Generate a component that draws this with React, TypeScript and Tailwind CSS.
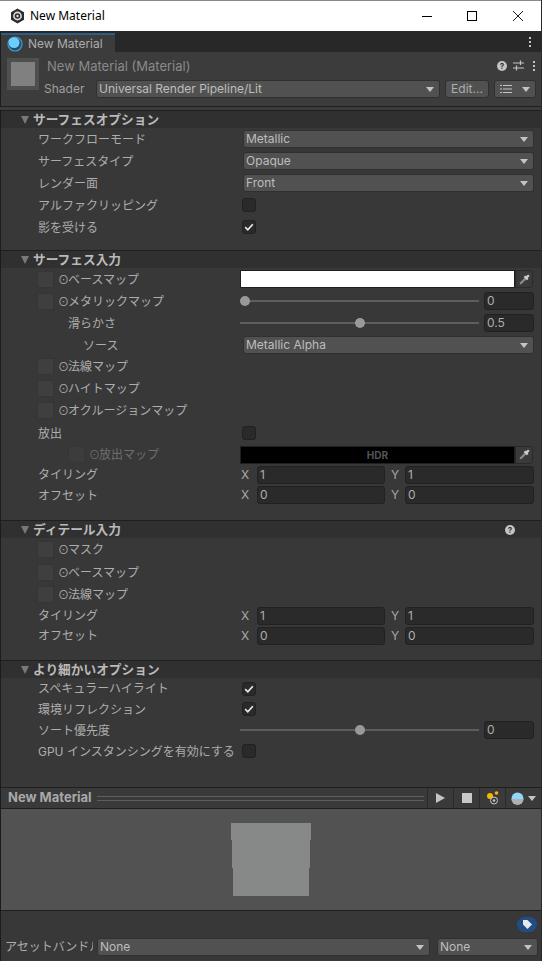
import type { ReactNode } from "react";

const jp = "[font-family:Inter,'Noto_Sans_CJK_JP',sans-serif]";

function Caret() {
    return <span className="w-0 h-0 border-l-[4px] border-r-[4px] border-t-[5px] border-l-transparent border-r-transparent border-t-[#c4c4c4]" />;
}

function Dropdown({ children, className = "" }: { children: ReactNode; className?: string }) {
    return (
        <div className={`h-[18px] bg-[#515151] border border-[#303030] rounded-[3px] flex items-center justify-between pl-[2px] pr-[5px] text-[12px] text-[#bdbdbd] ${className}`}>
            <span className="truncate">{children}</span>
            <Caret />
        </div>
    );
}

function Check({ on }: { on?: boolean }) {
    return (
        <div className="ml-[2px] w-[14px] h-[14px] bg-[#2a2a2a] border border-[#212121] rounded-[3px] flex items-center justify-center">
            {on && (
                <svg width="10" height="10" viewBox="0 0 10 10" fill="none" stroke="#e8e8e8" strokeWidth="1.7">
                    <path d="M1.2 5.2 L3.8 7.8 L8.8 2.2" />
                </svg>
            )}
        </div>
    );
}

function Row({ h, label, indent = "pl-[37px]", children }: { h: string; label?: ReactNode; indent?: string; children?: ReactNode }) {
    return (
        <div className={`flex items-center ${h}`}>
            <div className={`w-[239px] shrink-0 whitespace-nowrap overflow-hidden pt-[1px] text-[12px] text-[#adadad] ${indent}`}>{label}</div>
            <div className="w-[294px] flex items-center">{children}</div>
        </div>
    );
}

function TexRow({ h, label, pad = "pl-[36px]", dim }: { h: string; label: string; pad?: string; dim?: boolean }) {
    return (
        <div className={`flex items-center gap-[4px] ${h} ${pad}`}>
            <div className={`w-[17px] h-[17px] bg-[#3f3f3f] border border-[#353535] ${dim ? "opacity-60" : ""}`} />
            <span className={`pt-[1px] text-[12px] whitespace-nowrap ${dim ? "text-[#6e6e6e]" : "text-[#adadad]"}`}>
                <span className="inline-block w-[10px] text-[11px] leading-[12px]">⊙</span>{label}
            </span>
        </div>
    );
}

function Header({ title, help }: { title: string; help?: boolean }) {
    return (
        <div className="h-[17px] bg-[#303030] border-t border-[#1f1f1f] box-content flex items-center">
            <span className="ml-[20px] w-0 h-0 border-l-[4.5px] border-r-[4.5px] border-t-[8px] border-l-transparent border-r-transparent border-t-[#787878]" />
            <span className="ml-[4px] text-[12.7px] font-bold text-[#bababa]">{title}</span>
            {help && <span className="ml-auto mr-[26px] w-[10px] h-[10px] rounded-full bg-[#c4c4c4] text-[#333] text-[8px] font-bold leading-[10px] text-center">?</span>}
        </div>
    );
}

function NumField({ v, className = "" }: { v: string; className?: string }) {
    return <div className={`h-[18px] bg-[#2a2a2a] border border-[#212121] rounded-[3px] pl-[2px] text-[12px] leading-[16px] text-[#adadad] ${className}`}>{v}</div>;
}

function Slider({ pos, v }: { pos: string; v: string }) {
    return (
        <div className="flex items-center w-full">
            <div className={`w-[239px] h-[2px] bg-[#5e5e5e] flex items-center ${pos}`}>
                <div className="w-[10px] h-[10px] rounded-full bg-[#999]" />
            </div>
            <NumField v={v} className="ml-[5px] w-[50px]" />
        </div>
    );
}

function Vec({ a, b }: { a: string; b: string }) {
    return (
        <div className="flex items-center w-full text-[12px] text-[#a8a8a8]">
            <span className="w-[17px] pl-[1px]">X</span>
            <NumField v={a} className="w-[128px]" />
            <span className="w-[20px] text-center">Y</span>
            <NumField v={b} className="w-[129px]" />
        </div>
    );
}

function Dropper() {
    return (
        <div className="w-[18px] h-[18px] bg-[#3a3a3a] border border-[#2a2a2a] rounded-r-[3px] flex items-center justify-center">
            <svg width="13" height="13" viewBox="0 0 12 12" fill="none">
                <path d="M1.5 10.5 L2 8.5 L6.5 4 L8 5.5 L3.5 10 Z" fill="#8a8a8a" />
                <path d="M6 3 L9 6 M7.5 4.5 L10 2" stroke="#d0d0d0" strokeWidth="2" />
            </svg>
        </div>
    );
}

function Dots() {
    return (
        <div className="flex flex-col gap-[2px]">
            <span className="w-[2px] h-[2px] bg-[#c4c4c4]" />
            <span className="w-[2px] h-[2px] bg-[#c4c4c4]" />
            <span className="w-[2px] h-[2px] bg-[#c4c4c4]" />
        </div>
    );
}

export default function App() {
    return (
        <div className={`w-[542px] h-[961px] overflow-hidden bg-[#383838] border-r border-[#2a2a2a] flex flex-col ${jp}`}>
            <div className="h-[31px] shrink-0 bg-white border-t border-[#8a8a8a] flex items-center">
                <svg className="ml-[10px]" width="15" height="16" viewBox="0 0 15 16">
                    <path d="M7.5 0.5 L14 4.2 V11.8 L7.5 15.5 L1 11.8 V4.2 Z" fill="#2b2b2b" />
                    <circle cx="7.5" cy="8" r="3.6" fill="none" stroke="#dcdcdc" strokeWidth="1.6" />
                    <circle cx="7.5" cy="8" r="1.2" fill="#dcdcdc" />
                </svg>
                <span className="ml-[5px] text-[12px] text-black font-['Noto_Sans']">New Material</span>
                <div className="ml-auto flex items-center">
                    <span className="w-[10px] h-[1px] bg-black mr-[35px]" />
                    <span className="w-[10px] h-[10px] border border-black mr-[36px]" />
                    <svg className="mr-[18px]" width="10" height="10" viewBox="0 0 10 10" stroke="black" strokeWidth="0.9">
                        <path d="M0 0 L10 10 M10 0 L0 10" />
                    </svg>
                </div>
            </div>

            <div className="h-[21px] shrink-0 bg-[#282828] flex items-stretch border-l border-[#1c1c1c]">
                <div className="w-[114px] mt-[2px] bg-[#3c3c3c] border-t-2 border-[#2c5d87] flex items-center">
                    <svg className="ml-[6px]" width="16" height="16" viewBox="0 0 17 17">
                        <circle cx="8.5" cy="8.5" r="7.5" fill="#1f4f6c" stroke="#3f9fd0" strokeWidth="1.2" />
                        <circle cx="7.5" cy="7" r="5.8" fill="#6fcdfb" />
                    </svg>
                    <span className="ml-[5px] text-[12px] text-[#adadad]">New Material</span>
                </div>
                <div className="ml-auto mr-[10px] flex items-center">
                    <Dots />
                </div>
            </div>

            <div className="h-[54px] shrink-0 bg-[#3c3c3c] border-l border-[#1c1c1c] relative">
                <div className="flex items-start pt-[6px] pl-[6px]">
                    <div className="w-[32px] h-[32px] bg-[#4f4f4f] flex items-center justify-center">
                        <div className="w-[24px] h-[24px] bg-[#808080]" />
                    </div>
                    <span className="ml-[8px] mt-[-1px] text-[13px] text-[#8a8a8a]">New Material (Material)</span>
                    <div className="ml-auto mr-[6px] mt-[2px] flex items-center gap-[6px]">
                        <span className="w-[10px] h-[10px] rounded-full bg-[#c4c4c4] text-[#333] text-[8px] font-bold leading-[10px] text-center">?</span>
                        <svg width="11" height="11" viewBox="0 0 11 11" stroke="#c4c4c4" strokeWidth="1.2">
                            <path d="M0 3 H11 M0 8 H11 M7.5 0.5 V5 M3.5 5.5 V10.5" />
                        </svg>
                        <div className="ml-[3px]"><Dots /></div>
                    </div>
                </div>
                <div className="absolute left-0 right-0 top-[28px] flex items-center pl-[43px]">
                    <span className="w-[52px] text-[12px] text-[#a0a0a0]">Shader</span>
                    <Dropdown className="w-[344px]">Universal Render Pipeline/Lit</Dropdown>
                    <div className="ml-[5px] w-[44px] h-[18px] bg-[#515151] border border-[#303030] rounded-[3px] text-[12px] text-[#adadad] leading-[16px] text-center">Edit...</div>
                    <div className="ml-[5px] w-[42px] h-[18px] bg-[#515151] border border-[#303030] rounded-[3px] flex items-center justify-between px-[5px]">
                        <svg width="12" height="10" viewBox="0 0 12 10" stroke="#c4c4c4" strokeWidth="1">
                            <path d="M3 1.5 H12 M3 5 H12 M3 8.5 H12 M0 1.5 H2 M0 5 H2 M0 8.5 H2" />
                        </svg>
                        <Caret />
                    </div>
                </div>
            </div>

            <div className="h-[4px] shrink-0 border-t border-[#1f1f1f] bg-[#3c3c3c]" />

            <div className="flex-1 min-h-0 border-l border-[#1c1c1c] flex flex-col">
                <Header title="サーフェスオプション" />
                <Row h="h-[22px]" label="ワークフローモード"><Dropdown className="ml-[3px] w-[291px]">Metallic</Dropdown></Row>
                <Row h="h-[22px]" label="サーフェスタイプ"><Dropdown className="ml-[3px] w-[291px]">Opaque</Dropdown></Row>
                <Row h="h-[22px]" label="レンダー面"><Dropdown className="ml-[3px] w-[291px]">Front</Dropdown></Row>
                <Row h="h-[22px]" label="アルファクリッピング"><Check /></Row>
                <Row h="h-[22px]" label="影を受ける"><Check on /></Row>
                <div className="h-[12px]" />

                <Header title="サーフェス入力" />
                <div className="flex items-center h-[22px]">
                    <div className="w-[239px] shrink-0"><TexRow h="h-[22px]" label="ベースマップ" /></div>
                    <div className="w-[275px] h-[18px] bg-white border border-[#202020]" />
                    <Dropper />
                </div>
                <div className="flex items-center h-[22px]">
                    <div className="w-[239px] shrink-0"><TexRow h="h-[22px]" label="メタリックマップ" /></div>
                    <div className="w-[294px]"><Slider pos="justify-start" v="0" /></div>
                </div>
                <Row h="h-[22px]" label="滑らかさ" indent="pl-[67px]"><Slider pos="justify-center" v="0.5" /></Row>
                <Row h="h-[22px]" label="ソース" indent="pl-[82px]"><Dropdown className="ml-[3px] w-[291px]">Metallic Alpha</Dropdown></Row>
                <TexRow h="h-[21px]" label="法線マップ" />
                <TexRow h="h-[22px]" label="ハイトマップ" />
                <TexRow h="h-[22px]" label="オクルージョンマップ" />
                <Row h="h-[24px]" label="放出"><Check /></Row>
                <div className="flex items-center h-[19px]">
                    <div className="w-[239px] shrink-0"><TexRow h="h-[19px]" label="放出マップ" pad="pl-[67px]" dim /></div>
                    <div className="w-[275px] h-[18px] bg-black border border-[#202020] text-center text-[10px] leading-[16px] text-[#555] font-bold">HDR</div>
                    <Dropper />
                </div>
                <Row h="h-[21px]" label="タイリング"><Vec a="1" b="1" /></Row>
                <Row h="h-[20px]" label="オフセット"><Vec a="0" b="0" /></Row>
                <div className="h-[15px]" />

                <Header title="ディテール入力" help />
                <TexRow h="h-[23px]" label="マスク" />
                <TexRow h="h-[22px]" label="ベースマップ" />
                <TexRow h="h-[22px]" label="法線マップ" />
                <Row h="h-[21px]" label="タイリング"><Vec a="1" b="1" /></Row>
                <Row h="h-[19px]" label="オフセット"><Vec a="0" b="0" /></Row>
                <div className="h-[15px]" />

                <Header title="より細かいオプション" />
                <Row h="h-[21px]" label="スペキュラーハイライト"><Check on /></Row>
                <Row h="h-[20px]" label="環境リフレクション"><Check on /></Row>
                <Row h="h-[22px]" label="ソート優先度"><Slider pos="justify-center" v="0" /></Row>
                <Row h="h-[20px]" label="GPU インスタンシングを有効にする"><Check /></Row>
                <div className="h-[26px]" />

                <div className="h-[20px] shrink-0 bg-[#3a3a3a] border-t border-[#1f1f1f] box-content flex items-center">
                    <span className="ml-[7px] text-[13px] font-bold text-[#a8a8a8]">New Material</span>
                    <div className="flex-1 ml-[5px] h-[5px] border-y border-[#5e5e5e]" />
                    <div className="ml-[3px] h-full w-[26px] border-l border-[#2a2a2a] flex items-center justify-center">
                        <span className="w-0 h-0 border-y-[5px] border-l-[9px] border-y-transparent border-l-[#c4c4c4]" />
                    </div>
                    <div className="h-full w-[26px] border-l border-[#2a2a2a] flex items-center justify-center">
                        <span className="w-[10px] h-[10px] bg-[#c8c8c8]" />
                    </div>
                    <div className="h-full w-[26px] border-l border-[#2a2a2a] flex items-center justify-center">
                        <svg width="14" height="14" viewBox="0 0 14 14">
                            <circle cx="4" cy="5" r="3" fill="#f5b800" />
                            <circle cx="10.5" cy="2" r="1.8" fill="#f5b800" />
                            <circle cx="8" cy="9.5" r="3.5" fill="none" stroke="#c4c4c4" strokeWidth="1" />
                            <circle cx="8" cy="9.5" r="1.3" fill="#c4c4c4" />
                        </svg>
                    </div>
                    <div className="h-full w-[36px] border-l border-[#2a2a2a] flex items-center gap-[4px] pl-[5px]">
                        <svg width="13" height="13" viewBox="0 0 13 13">
                            <circle cx="6.5" cy="6.5" r="6" fill="#90d8fb" />
                            <path d="M0.5 7 A6 6 0 0 0 12.5 7 Z" fill="#b0b0b0" />
                        </svg>
                        <Caret />
                    </div>
                </div>

                <div className="h-[101px] shrink-0 bg-[#525252] border-t border-[#1f1f1f] box-content flex flex-col items-center justify-center">
                    <div className="w-[80px] h-[17px] bg-[#878988]" />
                    <div className="w-[78px] h-[28px] bg-[#878988]" />
                    <div className="w-[76px] h-[28px] bg-[#878988]" />
                </div>

                <div className="flex-1 border-t border-[#1f1f1f] flex flex-col">
                    <div className="h-[26px] flex items-center justify-end pr-[4px]">
                        <div className="w-[20px] h-[15px] rounded-full bg-[#214c85] flex items-center justify-center">
                            <svg width="11" height="11" viewBox="0 0 11 11">
                                <path d="M1 1 H5.5 L10 5.5 L5.5 10 L1 5.5 Z" fill="#e8e8e8" />
                            </svg>
                        </div>
                    </div>
                    <div className="flex items-center h-[20px]">
                        <div className="w-[96px] pl-[4px] pr-[4px] shrink-0">
                            <div className="overflow-hidden whitespace-nowrap text-[12px] text-[#adadad]">アセットバンドル</div>
                        </div>
                        <Dropdown className="w-[333px]">None</Dropdown>
                        <Dropdown className="ml-[7px] w-[101px]">None</Dropdown>
                    </div>
                </div>
            </div>
        </div>
    );
}
